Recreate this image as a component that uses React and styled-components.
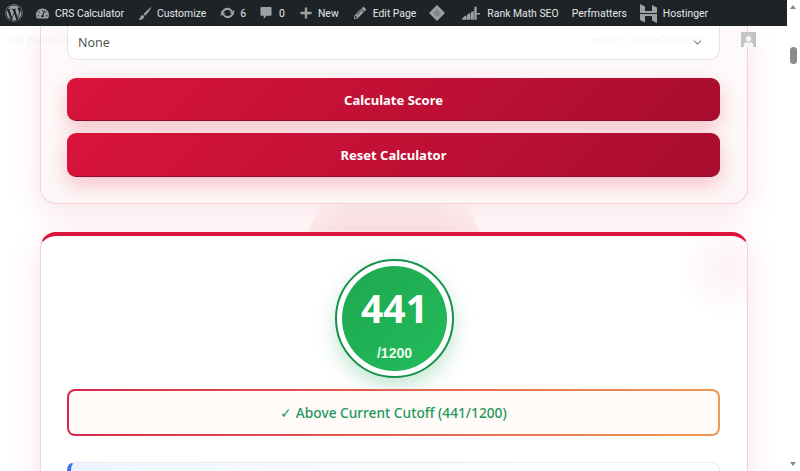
import React from 'react'
import styled, { createGlobalStyle } from 'styled-components'
import { FaWordpress, FaTachometerAlt, FaPencilAlt, FaUser } from 'react-icons/fa'
import { FiChevronDown } from 'react-icons/fi'

const Global = createGlobalStyle`
  html, body { margin: 0; padding: 0; height: 100%; overflow: hidden; background: #fff; }
  * { box-sizing: border-box; }
`

const Page = styled.div`
  width: 800px;
  height: 471px;
  display: flex;
  flex-direction: column;
  overflow: hidden;
  font-family: "Noto Sans", "Open Sans", sans-serif;
`

const AdminBar = styled.div`
  flex: 0 0 26px;
  width: 787px;
  display: flex;
  align-items: center;
  background: #1d2327;
  color: #e6e7e7;
  font-family: Roboto, "Noto Sans", sans-serif;
  font-size: 10.4px;
  white-space: nowrap;
  padding-left: 5px;
  position: relative;
  z-index: 5;
`

const BarItem = styled.div`
  display: flex;
  align-items: center;
  gap: ${p => p.$gap ?? 5}px;
  margin-right: ${p => p.$right ?? 14}px;
  & svg { color: #9da0a3; flex: 0 0 auto; }
`

const Body = styled.div`
  flex: 1;
  display: flex;
  min-height: 0;
`

const Content = styled.div`
  flex: 0 0 787px;
  padding: 0 39px 0 40px;
  position: relative;
  overflow: hidden;
  background: #fff;
`

const Ghost = styled.div`
  position: absolute;
  top: ${p => p.$top}px;
  left: ${p => p.$left}px;
  font-size: 10.5px;
  color: rgba(120, 120, 130, .09);
  white-space: nowrap;
  z-index: 3;
`

const Avatar = styled.div`
  position: absolute;
  top: 6px;
  left: 741px;
  width: 15px;
  height: 15px;
  background: #c4c4c4;
  color: #f6f6f6;
  display: flex;
  align-items: flex-end;
  justify-content: center;
  overflow: hidden;
  z-index: 3;
`

const Card = styled.section`
  position: relative;
  background: rgba(255, 250, 250, .96);
  border: 1px solid #f5d2d7;
  box-shadow: 0 8px 32px rgba(220, 20, 60, .12);
`

const FormCard = styled(Card)`
  height: 178px;
  padding: 0 27px 0 26px;
  border-top: 0;
  border-radius: 0 0 16px 16px;
  background: linear-gradient(180deg, #fffafa, #fdf7f7);
`

const Select = styled.div`
  height: 34px;
  background: #fff;
  border: 1px solid #e9e6e6;
  border-top: 0;
  border-radius: 0 0 10px 10px;
  display: flex;
  align-items: center;
  justify-content: space-between;
  padding: 0 15px 0 10px;
  color: #555;
  font-size: 12.5px;
  margin-bottom: 18px;
  & svg { color: #888; }
`

const Button = styled.div`
  height: ${p => p.$h}px;
  margin-bottom: 12px;
  padding-top: 1px;
  border-radius: 9px;
  background: linear-gradient(135deg, #d9143b 0%, #a80d2e 100%);
  box-shadow: 0 8px 20px rgba(220, 20, 60, .24);
  border-bottom: 1px solid #8f0b28;
  color: #fff;
  font-size: 13px;
  font-weight: 700;
  display: flex;
  align-items: center;
  justify-content: center;
`

const Gap = styled.div`
  height: 28px;
  display: flex;
  justify-content: center;
`

const Flare = styled.div`
  width: 172px;
  height: 28px;
  background: linear-gradient(90deg, #fcecee, #f9e2e5 25%, #f9e2e5 75%, #fcecee);
  clip-path: polygon(7% 0, 93% 0, 100% 100%, 0 100%);
  filter: blur(1.5px);
`

const ResultCard = styled(Card)`
  height: 300px;
  padding: 23px 27px 0 26px;
  border-top: 4px solid #dc143c;
  border-radius: 16px 16px 0 0;
  background: #fff;
  overflow: hidden;
`

const Glow = styled.div`
  position: absolute;
  top: -14px;
  right: -36px;
  width: 112px;
  height: 92px;
  background: radial-gradient(circle, rgba(220, 20, 60, .06), rgba(220, 20, 60, 0) 70%);
`

const ScoreRing = styled.div`
  width: 119px;
  height: 119px;
  margin: 0 0 11px 268px;
  border-radius: 50%;
  border: 2px solid #15924a;
  background: #fff;
  padding: 5px;
  box-shadow: 0 8px 20px rgba(34, 160, 90, .28);
`

const ScoreFill = styled.div`
  height: 100%;
  border-radius: 50%;
  background: linear-gradient(135deg, #1fa850, #22bb5a);
  color: #fff;
  display: flex;
  flex-direction: column;
  align-items: center;
`

const ScoreValue = styled.div`
  font-size: 39px;
  font-weight: 700;
  line-height: 46px;
  margin-top: 19px;
  font-family: "Open Sans", "Noto Sans", sans-serif;
`

const ScoreMax = styled.div`
  font-size: 14px;
  font-weight: 700;
  line-height: 16px;
  margin-top: 14px;
  color: #eafbef;
  font-family: "Liberation Sans", sans-serif;
`

const CutoffBox = styled.div`
  height: 47px;
  border-radius: 8px;
  border: 2px solid transparent;
  background:
    linear-gradient(#fffbf9, #fffbf9) padding-box,
    linear-gradient(90deg, #d8284c, #ee9a55) border-box;
  color: #25975a;
  font-size: 13.7px;
  font-weight: 500;
  display: flex;
  align-items: center;
  justify-content: center;
  margin-bottom: 26px;
`

const InfoBox = styled.div`
  height: 40px;
  border-radius: 8px;
  border: 1px solid #ececf0;
  border-left: 4px solid #3b76ee;
  background: linear-gradient(90deg, #eef4ff, #fff 70%);
`

const Scrollbar = styled.div`
  flex: 1;
  position: relative;
  background: #fff;
`

const Arrow = styled.div`
  position: absolute;
  left: 3px;
  top: ${p => p.$top}px;
  width: 0;
  height: 0;
  border-left: 3.5px solid transparent;
  border-right: 3.5px solid transparent;
  ${p => (p.$up ? 'border-bottom: 4px solid #8a8a8a;' : 'border-top: 4px solid #8a8a8a;')}
`

const Thumb = styled.div`
  position: absolute;
  left: 3px;
  top: 21px;
  width: 7px;
  height: 17px;
  border-radius: 4px;
  background: #8a8a8a;
`

const BrushIcon = () => (
  <svg width="14" height="15" viewBox="0 0 15 15" fill="currentColor">
    <path d="M14.500 0.500C12 2 8 5.500 5.800 8.300L7.600 10C10 7.800 13.200 3.500 14.500 0.500z" />
    <path d="M5 9c-1.800 0.300-2.200 1.500-2.600 2.800C2.100 12.800 1.400 13.500 0.300 14c2.400 0.800 5.700 0.300 6.600-3.200z" />
  </svg>
)

const UpdateIcon = () => (
  <svg width="15" height="14" viewBox="0 0 16 14" fill="currentColor">
    <path d="M8 1.500c2.300 0 4.200 1.300 5 3.300L15.500 4l-1 5.200L10.300 6.400l1.400-.8C11 4.400 9.600 3.800 8 3.800c-1.700 0-3.200.8-3.900 2.200H1.600C2.500 3.400 5 1.500 8 1.500z" />
    <path d="M8 12.500c-2.300 0-4.200-1.300-5-3.300L.5 10l1-5.200 4.200 2.800-1.400.8C5 9.600 6.400 10.200 8 10.200c1.700 0 3.200-.8 3.900-2.200h2.500c-.9 2.600-3.400 4.500-6.400 4.500z" />
  </svg>
)

const CommentIcon = () => (
  <svg width="12" height="14" viewBox="0 0 13 14" fill="currentColor">
    <path d="M1.500 0.500h10c.6 0 1 .4 1 1v7.500c0 .6-.4 1-1 1H7l-3 3.500v-3.500H1.500c-.6 0-1-.4-1-1V1.500c0-.6.4-1 1-1z" />
  </svg>
)

const PlusIcon = () => (
  <svg width="12" height="12" viewBox="0 0 13 13" fill="currentColor">
    <path d="M5.200 0.500h2.600v4.700h4.700v2.600H7.800v4.700H5.200V7.800H0.500V5.200h4.700z" />
  </svg>
)

const RankIcon = () => (
  <svg width="18" height="14" viewBox="0 0 19 14" fill="currentColor">
    <path d="M0 13l3-3 2 1v3H0zM5 9l3-2 1 1v6H5.500zM9.500 6l3-1v9h-3zM13 1l2.500-1v14H13zM15.500 7h3.500v1.500h-3.500z" />
  </svg>
)

const HostingerIcon = () => (
  <svg width="17" height="19" viewBox="0 0 17 19" fill="currentColor">
    <path d="M0 0l5 2.500v4.500l7 0V1l5 2.500V9H0zM0 10h17v9l-5-2.500V12H5v6.500L0 16z" />
  </svg>
)

const DiamondIcon = () => (
  <svg width="16" height="16" viewBox="0 0 17 17">
    <path d="M8.500 0L17 8.500 8.500 17 0 8.500z" fill="#9da0a3" />
    <path d="M8.500 4L13 8.500 8.500 13 4 8.500z" fill="#84878a" />
  </svg>
)

export default function App() {
  return (
    <Page>
      <Global />
      <AdminBar>
        <BarItem $right={13}><FaWordpress size={18} /></BarItem>
        <BarItem $right={14} $gap={6}><FaTachometerAlt size={13} />CRS Calculator</BarItem>
        <BarItem $right={14}><BrushIcon />Customize</BarItem>
        <BarItem $right={14}><UpdateIcon />6</BarItem>
        <BarItem $right={15} $gap={7}><CommentIcon />0</BarItem>
        <BarItem $right={15} $gap={6}><PlusIcon />New</BarItem>
        <BarItem $right={13} $gap={7}><FaPencilAlt size={12} />Edit Page</BarItem>
        <BarItem $right={17}><DiamondIcon /></BarItem>
        <BarItem $right={13} $gap={7}><RankIcon />Rank Math SEO</BarItem>
        <BarItem $right={13}>Perfmatters</BarItem>
        <BarItem $right={0} $gap={6}><HostingerIcon />Hostinger</BarItem>
      </AdminBar>
      <Body>
        <Content>
          <Ghost $top={7} $left={6}>504 Home Pa</Ghost>
          <Ghost $top={7} $left={592}>Howdy, shifar0989990</Ghost>
          <Avatar><FaUser size={11} /></Avatar>
          <FormCard>
            <Select>None<FiChevronDown size={13} /></Select>
            <Button $h={43}>Calculate Score</Button>
            <Button $h={44}>Reset Calculator</Button>
          </FormCard>
          <Gap><Flare /></Gap>
          <ResultCard>
            <Glow />
            <ScoreRing>
              <ScoreFill>
                <ScoreValue>441</ScoreValue>
                <ScoreMax>/1200</ScoreMax>
              </ScoreFill>
            </ScoreRing>
            <CutoffBox>✓ Above Current Cutoff (441/1200)</CutoffBox>
            <InfoBox />
          </ResultCard>
        </Content>
        <Scrollbar>
          <Arrow $up $top={-21} />
          <Thumb />
          <Arrow $top={436} />
        </Scrollbar>
      </Body>
    </Page>
  )
}
